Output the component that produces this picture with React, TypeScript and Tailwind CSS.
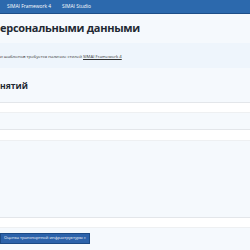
const App = () => {
  return (
    <div className="w-[250px] h-[250px] overflow-hidden bg-[#f5f9fd] font-['Open_Sans',sans-serif] text-[#1f2933]">
      <nav className="h-[14px] bg-[#2c69ad] border-b border-[#1d4e88] flex items-center gap-[11px] pl-[7px] text-white text-[4.9px]">
        <span>SIMAI Framework 4</span>
        <span>SIMAI Studio</span>
      </nav>
      <div className="h-[29px] flex items-center">
        <h1 className="text-[11px] font-bold tracking-tight whitespace-nowrap">ерсональными данными</h1>
      </div>
      <div className="h-[25px] bg-[#eef5fc] flex items-center pt-[2px]">
        <p className="text-[4.3px] text-[#333] whitespace-nowrap">
          и шаблонов требуется наличие стилей <span className="underline">SIMAI Framework 4</span>
        </p>
      </div>
      <div className="h-[34px] flex items-center pt-[2px]">
        <h2 className="text-[8.6px] font-bold whitespace-nowrap">нятий</h2>
      </div>
      <div className="border-t border-[#e3e6ea] h-[10px] bg-white" />
      <div className="border-t border-[#eef0f2] h-[17px]" />
      <div className="border-t border-[#e3e6ea] h-[11px] bg-white" />
      <div className="border-t border-[#eef0f2] h-[77px]" />
      <div className="border-t border-[#e3e6ea] h-[10px] bg-white" />
      <div className="border-t border-[#eef0f2] pt-[5px] flex items-start">
        <button className="h-[11px] px-[3px] bg-[#2c62aa] border border-[#1c4a85] text-white text-[4.1px] leading-none whitespace-nowrap">
          Оценка транспортной инфраструктуры »
        </button>
      </div>
    </div>
  );
};

export default App;
